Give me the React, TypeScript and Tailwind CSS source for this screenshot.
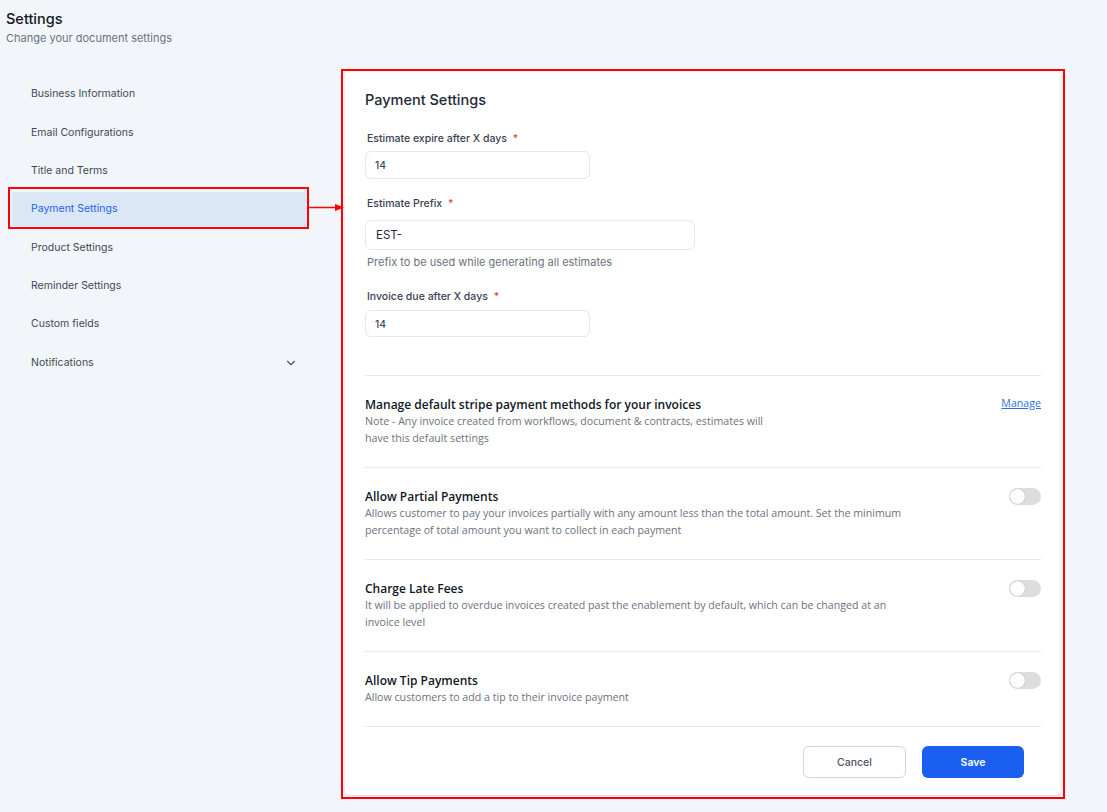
import { ChevronDown } from 'lucide-react';

const navItems = [
    'Business Information',
    'Email Configurations',
    'Title and Terms',
    'Payment Settings',
    'Product Settings',
    'Reminder Settings',
    'Custom fields',
    'Notifications',
];

const Toggle = () => (
    <div className="w-[32px] h-[17px] rounded-full bg-[#dddddd] flex items-center px-[1px] shrink-0">
        <div className="w-[15px] h-[15px] rounded-full bg-white shadow-[0_0_1px_rgba(0,0,0,0.35)]"></div>
    </div>
);

const Label = ({ text }: { text: string }) => (
    <div className="text-[10.5px] leading-[16px] font-medium text-[#374151] pl-[2px]">
        {text} <span className="text-[#ef4444] ml-[3px]">*</span>
    </div>
);

const toggles = [
    {
        title: 'Allow Partial Payments',
        desc: 'Allows customer to pay your invoices partially with any amount less than the total amount. Set the minimum percentage of total amount you want to collect in each payment',
    },
    {
        title: 'Charge Late Fees',
        desc: 'It will be applied to overdue invoices created past the enablement by default, which can be changed at an invoice level',
    },
    {
        title: 'Allow Tip Payments',
        desc: 'Allow customers to add a tip to their invoice payment',
    },
];

export default function App() {
    return (
        <div
            className="relative w-[1107px] h-[812px] bg-[#f2f6fa] overflow-hidden"
            style={{ fontFamily: 'Inter, "Liberation Sans", sans-serif' }}
        >
            <div className="pt-[9px] pl-[6px]">
                <h1 className="text-[14.5px] leading-[20px] font-medium text-[#111827]">Settings</h1>
                <p className="mt-[1px] text-[11px] leading-[16px] text-[#6b7280]">Change your document settings</p>
            </div>

            <div className="flex mt-[26px]">
                {/* sidebar */}
                <nav className="ml-[12px] w-[294px] pt-[5px] flex flex-col gap-[4.4px]">
                    {navItems.map((item) => {
                        const active = item === 'Payment Settings';
                        return (
                            <div
                                key={item}
                                className={
                                    active
                                        ? 'relative h-[34px] flex items-center pl-[19px] pr-[8px] bg-[#dbe7f7] text-[#2563eb] text-[10.5px]'
                                        : 'relative h-[34px] flex items-center pl-[19px] pr-[8px] text-[#3f4856] text-[10.5px]'
                                }
                            >
                                <span className="flex-1">{item}</span>
                                {item === 'Notifications' && <ChevronDown className="w-[14px] h-[14px] text-[#4b5563]" strokeWidth={2} />}
                                {active && (
                                    <div className="absolute left-[-4px] top-[-5px] right-[-3px] bottom-[-3px] border-2 border-[#ff0000]"></div>
                                )}
                            </div>
                        );
                    })}
                </nav>

                {/* card */}
                <div className="relative ml-[39px] w-[715px] h-[723px] bg-white rounded-[4px] shadow-[0_1px_2px_rgba(0,0,0,0.12)] px-[20px] pt-[18px]">
                    <div className="absolute left-[-4px] top-[-3px] right-[-5px] bottom-[-4px] border-2 border-[#ff0000] pointer-events-none"></div>

                    <h2 className="text-[14.5px] leading-[20px] font-medium text-[#1f2937]">Payment Settings</h2>

                    <div className="mt-[21px]">
                        <Label text="Estimate expire after X days" />
                        <div className="mt-[4px] w-[225px] h-[28px] rounded-[6px] border border-[#e5e7eb] flex items-center pt-[2px] px-[9px] text-[10.5px] text-[#1f2937]">14</div>
                    </div>

                    <div className="mt-[17px]">
                        <Label text="Estimate Prefix" />
                        <div className="mt-[8px] w-[330px] h-[30px] rounded-[6px] border border-[#e5e7eb] flex items-center pt-[1px] px-[10px] text-[11.5px] text-[#1f2937]">EST-</div>
                        <p className="mt-[4px] pl-[2px] text-[11px] leading-[16px] text-[#6b7280]">Prefix to be used while generating all estimates</p>
                    </div>

                    <div className="mt-[19px]">
                        <Label text="Invoice due after X days" />
                        <div className="mt-[5px] w-[225px] h-[27px] rounded-[6px] border border-[#e5e7eb] flex items-center pt-[2px] px-[9px] text-[10.5px] text-[#1f2937]">14</div>
                    </div>

                    <div className="mt-[38px] w-[676px] border-t border-[#e5e7eb]" style={{ fontFamily: '"Open Sans", "Noto Sans", sans-serif' }}>
                        <div className="flex justify-between items-start pt-[20px] pb-[20px] border-b border-[#e5e7eb]">
                            <div>
                                <h3 className="text-[12px] leading-[17px] font-semibold text-[#111827]">Manage default stripe payment methods for your invoices</h3>
                                <p className="w-[410px] text-[10.65px] leading-[17px] text-[#6b7280]">
                                    Note - Any invoice created from workflows, document &amp; contracts, estimates will have this default settings
                                </p>
                            </div>
                            <a className="text-[10.65px] leading-[17px] text-[#2f6fe4] underline -mt-[1px]">Manage</a>
                        </div>

                        {toggles.map((t) => (
                            <div key={t.title} className="flex justify-between items-start pt-[20px] pb-[20px] border-b border-[#e5e7eb]">
                                <div>
                                    <h3 className="text-[12px] leading-[17px] font-semibold text-[#111827]">{t.title}</h3>
                                    <p className="w-[540px] text-[10.65px] leading-[17px] text-[#6b7280]">{t.desc}</p>
                                </div>
                                <Toggle />
                            </div>
                        ))}

                        <div className="flex justify-end gap-[16px] pt-[19px] pr-[17px]" style={{ fontFamily: 'Inter, "Liberation Sans", sans-serif' }}>
                            <button className="w-[103px] h-[32px] pt-[2px] rounded-[6px] border border-[#d1d5db] bg-white text-[10.5px] font-medium text-[#4b5563]">Cancel</button>
                            <button className="w-[102px] h-[32px] pt-[2px] rounded-[6px] bg-[#1a5ff0] text-[10.5px] font-semibold text-white">Save</button>
                        </div>
                    </div>
                </div>
            </div>

            {/* annotation arrow */}
            <svg className="absolute left-[309px] top-[203px]" width="36" height="9" viewBox="0 0 36 9">
                <line x1="0" y1="4.5" x2="28" y2="4.5" stroke="#ff0000" strokeWidth="1.5" />
                <polygon points="26,1 35,4.5 26,8" fill="#ff0000" />
            </svg>
        </div>
    );
}
